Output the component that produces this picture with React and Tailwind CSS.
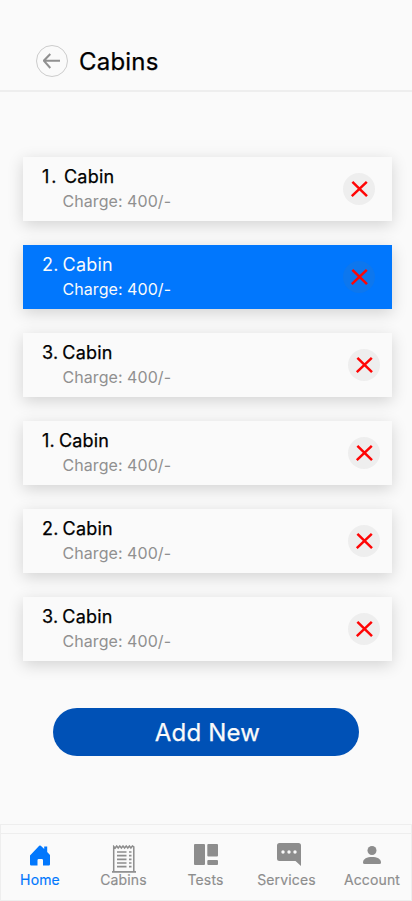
import React from "react";

const cabins = [
  { n: "1.", title: "gap-[5.5px]", number: "tracking-[2px]", wide: true },
  { n: "2.", title: "gap-[4px]", wide: true, active: true },
  { n: "3.", title: "gap-[4px]" },
  { n: "1.", title: "gap-[4px]" },
  { n: "2.", title: "gap-[4px]" },
  { n: "3.", title: "gap-[4px]" },
];

function Cabin({ n, title, number = "", wide, active }) {
  return (
    <li
      className={`flex h-16 items-center justify-between shadow-[0_4px_15px_rgba(0,0,0,0.16)] ${
        active ? "bg-[#0177fd]" : "bg-[#fafafa]"
      } ${wide ? "pr-[17px]" : "pr-3"}`}
    >
      <div className="h-16 pt-2">
        <div
          className={`flex h-6 items-center pl-[19px] whitespace-nowrap text-[18px] leading-6 tracking-[0.2px] ${title} ${
            active ? "text-[#fafafa]" : "text-black [-webkit-text-stroke:0.25px]"
          }`}
        >
          <span className={number}>{n}</span>
          <span>Cabin</span>
        </div>
        <div
          className={`pl-[39.5px] text-[16px] leading-[25px] tracking-[0.06px] whitespace-nowrap ${
            active ? "text-[#fafafa]" : "text-[#909090]"
          }`}
        >
          Charge: 400/-
        </div>
      </div>
      <button
        className={`flex size-8 items-center justify-center rounded-full ${
          active ? "bg-[#0d77ee]" : "bg-[#eeeeee]"
        }`}
      >
        <svg width="32" height="32" viewBox="0 0 32 32" fill="none" stroke="#ff0505" strokeWidth="2.5">
          <path d="M9.4 8.9 24 23.2M23.8 8.9 8.8 23.2" />
        </svg>
      </button>
    </li>
  );
}

const HomeIcon = () => (
  <svg width="20" height="22" viewBox="0 0 20 22" fill="currentColor">
    <path d="M0 10.6 9.2 .8Q10 0 10.8.8L14.2 4V1.6h3v5.3L20 10v9.3q0 1.2-1.2 1.2H13v-5.2q0-1.3-1.3-1.3H8.8q-1.3 0-1.3 1.3v5.2H1.2Q0 20.5 0 19.3Z" />
  </svg>
);

const CabinsIcon = () => (
  <svg width="24" height="28" viewBox="0 0 24 28" fill="none" stroke="currentColor">
    <path d="M1.7 26.5V1.5l1.5 1.5 1.5-2 1.5 2 1.6-2 1.6 2 1.6-2 1.6 2 1.6-2 1.6 2 1.6-2 1.5 2 1.5-2 1.4 1V26.5" strokeWidth="1.5" />
    <path d="M0 26.9h24" strokeWidth="1.7" />
    <path d="M5 7h9.5M5 10.7h9.5M5 14.3h9.5M5 18h9.5M5 21.7h9.5M17 7h2.5M17 10.7h2.5M17 14.3h2.5M17 18h2.5M17 21.7h2.5" strokeWidth="1.7" />
  </svg>
);

const TestsIcon = () => (
  <svg width="24" height="21" viewBox="0 0 24 21" fill="currentColor">
    <rect width="11" height="21" rx="1" />
    <rect x="13.3" width="10.7" height="12.5" rx="1" />
    <rect x="13.3" y="16" width="10.7" height="5" rx="1" />
  </svg>
);

const ServicesIcon = () => (
  <svg width="24" height="23" viewBox="0 0 24 23" fill="currentColor">
    <path d="M2.5 0h19Q24 0 24 2.5V23l-5.5-5h-16Q0 18 0 15.5v-13Q0 0 2.5 0Z" />
    <g fill="#fafafa">
      <circle cx="6" cy="9" r="1.7" />
      <circle cx="12" cy="9" r="1.7" />
      <circle cx="18" cy="9" r="1.7" />
    </g>
  </svg>
);

const AccountIcon = () => (
  <svg width="18" height="18" viewBox="0 0 18 18" fill="currentColor">
    <circle cx="9" cy="4.5" r="4.5" />
    <path d="M0 16.5C0 12.8 4 11 9 11s9 1.8 9 5.5Q18 18 16.5 18h-15Q0 18 0 16.5Z" />
  </svg>
);

const tabs = [
  { label: "Home", Icon: HomeIcon, box: "w-[80px] -ml-px text-[#0177fd]", pad: "pt-[11px]" },
  { label: "Cabins", Icon: CabinsIcon, box: "w-[87px] text-[#8d8d8d]", pad: "pt-[11px]" },
  { label: "Tests", Icon: TestsIcon, box: "w-[77px] text-[#8d8d8d]", pad: "pt-[10px]" },
  { label: "Services", Icon: ServicesIcon, box: "w-[85px] text-[#8d8d8d]", pad: "pt-[9px] pl-[5px]" },
  { label: "Account", Icon: AccountIcon, box: "w-[86px] text-[#8d8d8d]", pad: "pt-3" },
];

export default function App() {
  return (
    <div className="flex h-[901px] w-[412px] flex-col overflow-hidden bg-[#fafafa] font-['Inter',sans-serif]">
      <header className="flex h-[92px] shrink-0 items-start border-b-2 border-[#eeeeee] pt-[45px] pl-9">
        <button className="flex size-8 items-center justify-center rounded-full border border-[#cccccc]">
          <svg width="18" height="16" viewBox="0 0 18 16" fill="none" stroke="#909090" strokeWidth="2">
            <path d="M17 7.7H1M7.3 1 .8 7.7 7.3 15" />
          </svg>
        </button>
        <h1 className="ml-[11px] text-[24px] leading-[34px] font-normal tracking-[0.2px] text-black [-webkit-text-stroke:0.25px]">
          Cabins
        </h1>
      </header>
      <main className="flex grow flex-col pt-[65px]">
        <ul className="mr-5 ml-[23px] flex flex-col gap-6">
          {cabins.map((cabin, i) => (
            <Cabin key={i} {...cabin} />
          ))}
        </ul>
        <button className="mt-[47px] ml-[53px] h-12 w-[306px] rounded-full bg-[#0051b6] pt-px pl-[3px] text-[24px] leading-[48px] font-normal tracking-[0.2px] text-[#fafafa] [-webkit-text-stroke:0.25px]">
          Add New
        </button>
      </main>
      <nav className="h-[77px] shrink-0 border border-[#eeeeee] pt-2">
        <div className="flex h-[67px] border-t border-[#eeeeee]">
          {tabs.map(({ label, Icon, box, pad }) => (
            <a key={label} className={`flex shrink-0 flex-col items-center ${box}`}>
              <span className={`flex h-9 items-start ${pad}`}>
                <Icon />
              </span>
              <span className="text-[14px] leading-5 font-normal tracking-[0.15px] [-webkit-text-stroke:0.15px]">
                {label}
              </span>
            </a>
          ))}
        </div>
      </nav>
    </div>
  );
}
